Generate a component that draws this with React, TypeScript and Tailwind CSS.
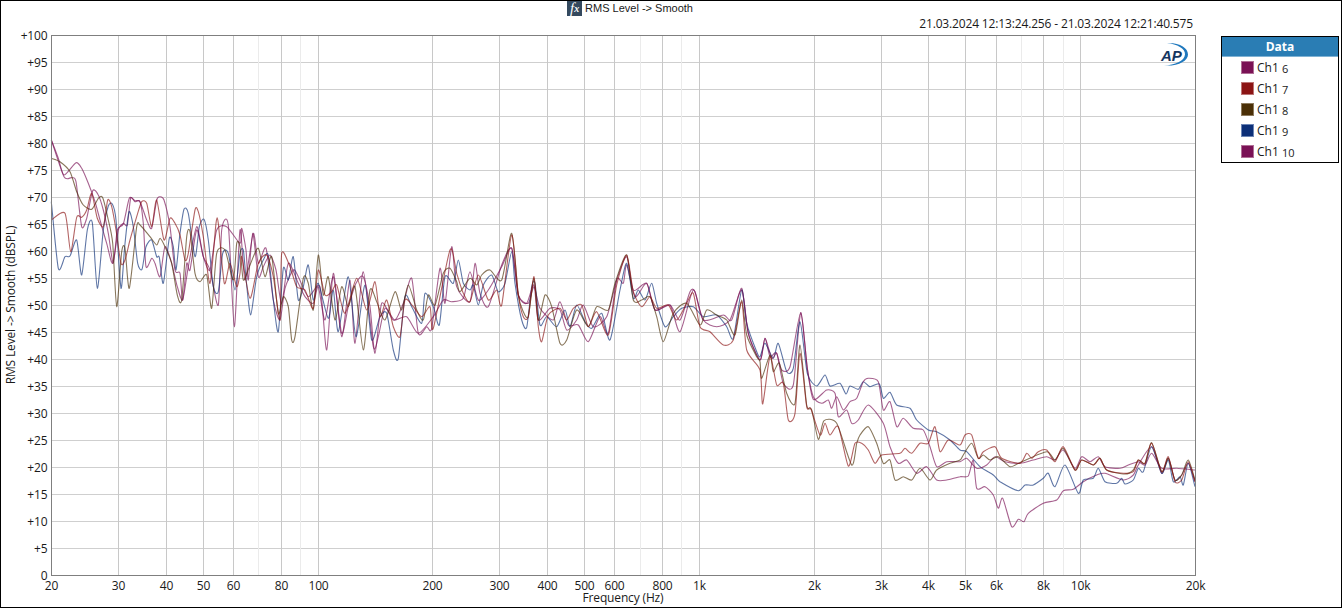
// App.tsx
import React from 'react';

// curve traces, read off in crops of the plot: [crop origin x, crop origin y, "x,y x,y ..."] at 3x
type Crop = [number, number, string];

function trace(crops: Crop[]): string {
  const pts: [number, number][] = [];
  let lastX = -1;
  for (const [ox, oy, raw] of crops) {
    for (const p of raw.split(' ')) {
      const [zx, zy] = p.split(',').map(Number);
      const x = ox + zx / 3;
      const y = oy + zy / 3;
      if (x <= lastX) continue;
      lastX = x;
      pts.push([x, y]);
    }
  }
  // light catmull-rom so peaks come out rounded like the analyzer's trace
  let d = `M${pts[0][0].toFixed(1)} ${pts[0][1].toFixed(1)}`;
  for (let i = 0; i < pts.length - 1; i++) {
    const a = pts[Math.max(i - 1, 0)];
    const b = pts[i];
    const c = pts[i + 1];
    const e = pts[Math.min(i + 2, pts.length - 1)];
    const k = 0.12;
    d += ` C${(b[0] + (c[0] - a[0]) * k).toFixed(1)} ${(b[1] + (c[1] - a[1]) * k).toFixed(1)} ${(c[0] - (e[0] - b[0]) * k).toFixed(1)} ${(c[1] - (e[1] - b[1]) * k).toFixed(1)} ${c[0].toFixed(1)} ${c[1].toFixed(1)}`;
  }
  return d;
}

const CURVES: { color: string; crops: Crop[] }[] = [
  {
    color: '#7a1155',
    crops: [
      [40, 130, '34,30 55,85 72,135 108,98 125,115 145,160 165,215 180,270 200,340 218,400 235,300 250,280 262,285 272,205 285,215 300,215 310,280 318,410 335,385 345,400 360,440 375,350 395,400 412,470 428,510 440,400 450,420 470,300 490,380 510,420 535,525 545,300 565,285 583,590 600,300'],
      [230, 220, '30,130 45,180 70,40 85,130 108,85 130,240 150,300 165,205 190,150 205,170 235,230 270,200 290,390 310,160 335,350 360,180 375,370 400,155 430,380 445,350 465,265 495,300 520,250 545,175 565,340 590,320 605,325 630,145 645,250 665,80 680,200 720,245'],
      [460, 220, '25,150 45,130 60,220 85,260 125,135 155,85 175,225 205,250 222,200 240,265 280,300 300,245 325,315 355,315 385,365 420,290 445,340 470,180 490,190 500,135 525,230 560,190 585,270 630,255 660,335 700,210 730,300 790,285 815,300 845,205 865,340 900,420'],
      [720, 280, '120,230 135,175 150,230 170,220 190,310 220,315 242,98 262,265 280,358 320,330 345,340 355,410 380,390 395,430 415,420 445,375 490,430 510,500 535,550 560,540 590,580 620,560 650,600 680,600 720,590'],
      [950, 400, '0,240 30,228 55,228 70,180 80,265 105,260 130,285 145,325 158,295 185,380 205,358 222,365 235,340 280,310 320,300 340,272 370,268 400,245 440,225 465,220 520,240 550,225 565,195 605,140 635,220 655,175 675,240 695,225 715,190 735,245'],
    ],
  },
  {
    color: '#0c2f78',
    crops: [
      [40, 130, '34,215 55,415 75,380 90,378 110,330 125,435 142,300 157,278 172,475 190,300 205,228 217,222 228,270 243,475 254,350 267,245 280,290 293,400 306,418 318,350 335,330 350,380 358,382 370,460 388,325 400,350 408,420 420,310 432,238 445,250 465,380 478,290 492,268 505,330 520,470 535,485 548,370 565,370 585,480 600,370'],
      [230, 220, '40,90 48,175 62,285 80,170 100,120 115,105 130,240 145,335 160,145 175,180 190,110 205,240 220,200 235,135 250,240 265,190 295,295 310,210 325,335 355,170 378,350 405,195 425,360 450,290 470,280 490,390 505,415 525,230 545,260 575,310 585,220 610,260 628,315 645,170 670,190 685,120 700,190 720,210'],
      [460, 220, '40,195 55,255 70,195 95,165 115,215 135,190 155,95 165,190 185,300 200,322 215,200 225,190 240,315 260,290 290,320 315,270 330,320 350,255 375,305 395,325 425,280 450,360 480,210 500,130 520,235 535,210 555,240 575,190 590,250 615,320 640,290 665,265 700,260 730,290 770,285 800,320 820,355 845,210 860,310 890,395 900,410'],
      [720, 280, '120,225 135,190 160,235 175,190 200,275 220,265 240,125 262,280 290,318 315,285 330,318 360,310 378,342 390,318 415,328 430,305 450,320 478,312 490,355 510,337 530,375 570,385 590,420 625,450 650,455 690,480 720,510'],
      [950, 400, '0,130 30,150 50,155 90,200 130,225 150,245 205,272 225,255 250,255 280,235 295,220 315,260 345,195 385,280 400,240 430,235 445,205 465,245 500,250 515,235 525,252 550,240 565,205 580,215 605,140 635,220 655,180 670,245 690,230 700,255 715,190 735,260'],
    ],
  },
  {
    color: '#7a1155',
    crops: [
      [40, 130, '34,30 72,140 95,143 108,155 125,290 140,265 158,182 175,195 190,240 205,310 220,400 232,300 250,282 268,205 285,212 300,215 320,270 335,295 350,210 360,200 372,210 390,290 405,420 420,430 428,510 445,410 470,290 490,380 510,420 530,300 560,290 600,340'],
      [230, 220, '35,25 48,90 55,180 68,40 85,170 100,140 120,105 138,150 155,250 175,130 205,190 225,230 250,250 265,200 285,300 310,170 335,340 355,260 378,190 400,170 420,260 435,400 455,250 490,300 530,290 565,340 610,290 640,240 665,245 700,235 720,155'],
      [460, 220, '20,235 55,240 85,210 125,140 155,85 175,225 200,250 222,195 235,300 270,265 300,270 320,330 350,300 370,255 400,320 440,290 470,180 500,110 520,210 560,190 585,270 630,255 660,300 690,215 705,215 730,300 770,320 810,300 845,210 865,340 900,420'],
      [720, 280, '120,230 135,175 155,235 170,220 185,270 210,260 242,98 262,265 280,350 305,370 325,360 335,385 350,350 370,390 390,365 410,355 430,305 445,295 475,305 490,390 510,365 530,440 550,415 580,445 610,450 630,500 650,560 680,545 720,545'],
      [950, 400, '0,185 15,215 50,175 80,205 110,195 135,170 165,185 210,190 250,180 290,170 315,180 340,150 375,205 395,170 420,185 445,170 465,200 510,205 535,195 565,185 585,195 605,160 635,205 680,205 735,210'],
    ],
  },
  {
    color: '#4a2f06',
    crops: [
      [40, 130, '34,85 60,95 90,125 110,185 130,225 155,238 175,205 188,203 205,270 218,340 230,530 245,365 255,355 268,475 290,290 300,285 330,320 350,345 360,325 375,350 395,400 412,495 425,510 440,320 450,305 465,430 480,455 500,435 515,535 530,370 555,360 580,450 590,340 600,350'],
      [230, 220, '40,180 60,135 85,85 105,170 125,110 145,280 160,230 175,260 185,360 195,350 220,175 235,190 250,270 265,105 280,225 295,170 315,300 335,200 355,260 375,200 400,390 420,210 440,245 465,300 495,215 515,270 535,195 560,270 580,300 595,225 615,255 640,160 660,145 680,185 690,215 720,175'],
      [460, 220, '30,170 50,195 65,165 90,150 125,180 155,40 175,225 190,275 205,290 222,175 235,300 255,225 275,260 300,370 320,360 350,270 385,320 410,260 445,270 465,190 500,105 520,240 545,240 570,230 590,290 610,365 640,280 680,250 720,315 740,270 770,285 800,300 825,345 845,240 860,345 890,410 900,425'],
      [720, 280, '120,250 125,295 150,225 160,275 178,250 200,340 225,370 240,195 260,375 275,390 295,478 312,422 350,430 395,555 410,490 420,465 445,440 470,490 490,550 510,540 525,600 550,590 575,600 600,565 630,600 650,570 690,550 720,540'],
      [950, 400, '0,200 10,205 40,165 65,130 85,175 100,165 120,180 145,170 180,200 215,185 290,155 315,180 340,145 375,210 395,180 430,195 450,175 470,210 525,222 550,210 565,180 585,190 605,128 635,215 655,175 675,240 695,225 715,180 735,240'],
    ],
  },
  {
    color: '#8b1414',
    crops: [
      [40, 130, '34,270 75,250 92,365 110,262 125,262 140,240 155,190 172,265 190,290 203,210 215,230 228,300 243,400 255,390 270,330 290,260 305,215 320,220 335,290 350,210 372,330 390,265 405,280 420,315 435,390 445,370 465,240 475,245 490,320 510,460 528,280 535,280 553,460 570,400 590,470 600,430'],
      [230, 220, '35,110 60,235 85,130 110,105 130,170 150,300 155,100 180,140 200,200 225,210 250,265 265,150 285,225 305,215 320,195 345,280 380,175 410,270 435,185 450,290 470,240 490,320 510,350 525,240 550,260 575,290 600,260 610,325 660,90 680,160 700,220 720,245'],
      [460, 220, '25,240 55,165 85,240 110,210 125,255 155,45 175,225 190,290 205,290 222,170 235,320 245,365 265,285 300,265 320,300 340,265 365,255 385,320 410,275 445,345 470,195 500,105 520,215 545,260 570,230 590,265 625,255 650,300 680,250 700,220 720,320 750,335 790,375 820,360 845,245 860,390 900,450'],
      [720, 280, '115,295 128,372 150,230 170,315 190,310 205,420 225,400 240,220 260,380 272,385 300,465 315,430 330,465 355,440 385,558 405,490 425,490 445,510 465,550 485,525 540,520 555,505 575,520 600,490 625,490 645,440 660,515 685,480 720,495'],
      [950, 400, '0,130 15,150 45,105 65,105 85,175 100,155 135,140 155,175 210,190 230,160 245,175 265,155 290,150 315,185 340,140 375,210 395,180 430,195 450,175 470,210 520,220 550,215 565,180 585,190 605,130 635,215 655,170 675,245 695,240 715,185 735,245'],
    ],
  },
];

const X0 = 51.5;
const DECADE = 381.3;
const xOf = (hz: number) => Math.floor(X0 + Math.log10(hz / 20) * DECADE) + 0.5;
const yOf = (db: number) => 575.5 - db * 5.4;
const yGrid = (db: number) => Math.floor(yOf(db)) + 0.5;

const X_LABELS: [number, string][] = [
  [20, '20'], [30, '30'], [40, '40'], [50, '50'], [60, '60'], [80, '80'], [100, '100'],
  [200, '200'], [300, '300'], [400, '400'], [500, '500'], [600, '600'], [800, '800'], [1000, '1k'],
  [2000, '2k'], [3000, '3k'], [4000, '4k'], [5000, '5k'], [6000, '6k'], [8000, '8k'], [10000, '10k'], [20000, '20k'],
];
const X_FAINT = [70, 90, 700, 900, 7000, 9000];
const Y_VALUES = Array.from({ length: 21 }, (_, i) => i * 5);

const LEGEND = [
  { n: '6', color: 'bg-[#7a1155]', edge: 'border-[#b06f96]' },
  { n: '7', color: 'bg-[#8b1414]', edge: 'border-[#bb7474]' },
  { n: '8', color: 'bg-[#4a2f06]', edge: 'border-[#8d7b5f]' },
  { n: '9', color: 'bg-[#0c2f78]', edge: 'border-[#6c85b5]' },
  { n: '10', color: 'bg-[#7a1155]', edge: 'border-[#b06f96]' },
];

function Chart() {
  return (
    <svg
      width={1209}
      height={576}
      viewBox="1 30 1209 576"
      className="shrink-0 overflow-visible font-['Open_Sans',sans-serif] text-xs tracking-[-0.15px]"
    >
      {Y_VALUES.map(v => (
        <line key={v} x1={X0} x2={1195.5} y1={yGrid(v)} y2={yGrid(v)} stroke="#cfcfcf" />
      ))}
      {X_LABELS.map(([hz]) => (
        <line key={hz} x1={xOf(hz)} x2={xOf(hz)} y1={35.5} y2={575.5} stroke="#c8c8c8" />
      ))}
      {X_FAINT.map(hz => (
        <line key={hz} x1={xOf(hz)} x2={xOf(hz)} y1={35.5} y2={575.5} stroke="#ebebeb" />
      ))}

      {CURVES.map((c, i) => (
        <path
          key={i}
          d={trace(c.crops)}
          fill="none"
          stroke={c.color}
          strokeOpacity={0.66}
          strokeWidth={1.1}
          strokeLinejoin="round"
        />
      ))}

      <rect x={X0} y={35.5} width={1144} height={540} fill="none" stroke="#7f7f7f" />

      {Y_VALUES.map(v => (
        <text key={v} x={47.5} y={yOf(v) + 4} textAnchor="end" className="fill-[#1a1a1a]">
          {v === 0 ? '0' : `+${v}`}
        </text>
      ))}
      {X_LABELS.map(([hz, label]) => (
        <text key={hz} x={xOf(hz)} y={589.5} textAnchor="middle" className="fill-[#1a1a1a]">
          {label}
        </text>
      ))}
      <text x={623} y={602} textAnchor="middle" className="fill-[#1a1a1a]">Frequency (Hz)</text>
      <text
        transform="translate(15 305) rotate(-90)"
        textAnchor="middle"
        className="fill-[#1a1a1a]"
      >
        RMS Level -&gt; Smooth (dBSPL)
      </text>

      {/* AP logo */}
      <path
        d="M1167 43 C1180 42.5 1188 48 1188 54.5 C1188 61 1178 66.5 1164 65.5 C1175 65 1184.5 61 1185 54.5 C1185.5 48.5 1177 44 1167 43 Z"
        fill="#1f78bd"
      />
      <text
        x={1161}
        y={61}
        className="fill-[#15365f] font-['Liberation_Sans',sans-serif] text-[15px] font-bold italic tracking-normal"
      >
        AP
      </text>
    </svg>
  );
}

function Legend() {
  return (
    <div className="ml-[11px] mt-[6px] h-[127px] w-[118px] shrink-0 border border-black bg-white">
      <div className="flex h-[20px] items-center justify-center border-b border-[#7fb2d4] bg-[#2a7db4] text-xs font-bold text-white">
        Data
      </div>
      <div className="flex flex-col pl-[19px]">
        {LEGEND.map(row => (
          <div key={row.n} className="flex h-[21px] items-center text-xs text-[#1a1a1a]">
            <span className={`h-[13px] w-[13px] border ${row.color} ${row.edge}`} />
            <span className="ml-[3px] w-[25px]">Ch1</span>
            <span className="mt-[3px] text-[11px]">{row.n}</span>
          </div>
        ))}
      </div>
    </div>
  );
}

export default function App() {
  return (
    <div className="flex h-[608px] w-[1342px] flex-col overflow-hidden border border-black bg-white font-['Open_Sans',sans-serif]">
      <div className="h-[29px] shrink-0">
        <div className="flex h-[15px] items-center justify-center gap-[3px] pr-[82px]">
          <span className="flex h-[15px] w-[15px] items-center justify-center bg-[#34495e] font-['Liberation_Serif',serif] text-[15px] italic leading-none text-white">
            f<span className="text-[10px] font-bold">x</span>
          </span>
          <span className="font-['Liberation_Sans',sans-serif] text-[11px] text-[#1a1a1a]">RMS Level -&gt; Smooth</span>
        </div>
        <div className="pr-[148px] text-right text-xs leading-[16px] tracking-[-0.15px] text-[#1a1a1a]">
          21.03.2024 12:13:24.256 - 21.03.2024 12:21:40.575
        </div>
      </div>
      <div className="flex min-h-0 flex-1 items-start">
        <Chart />
        <Legend />
      </div>
    </div>
  );
}
